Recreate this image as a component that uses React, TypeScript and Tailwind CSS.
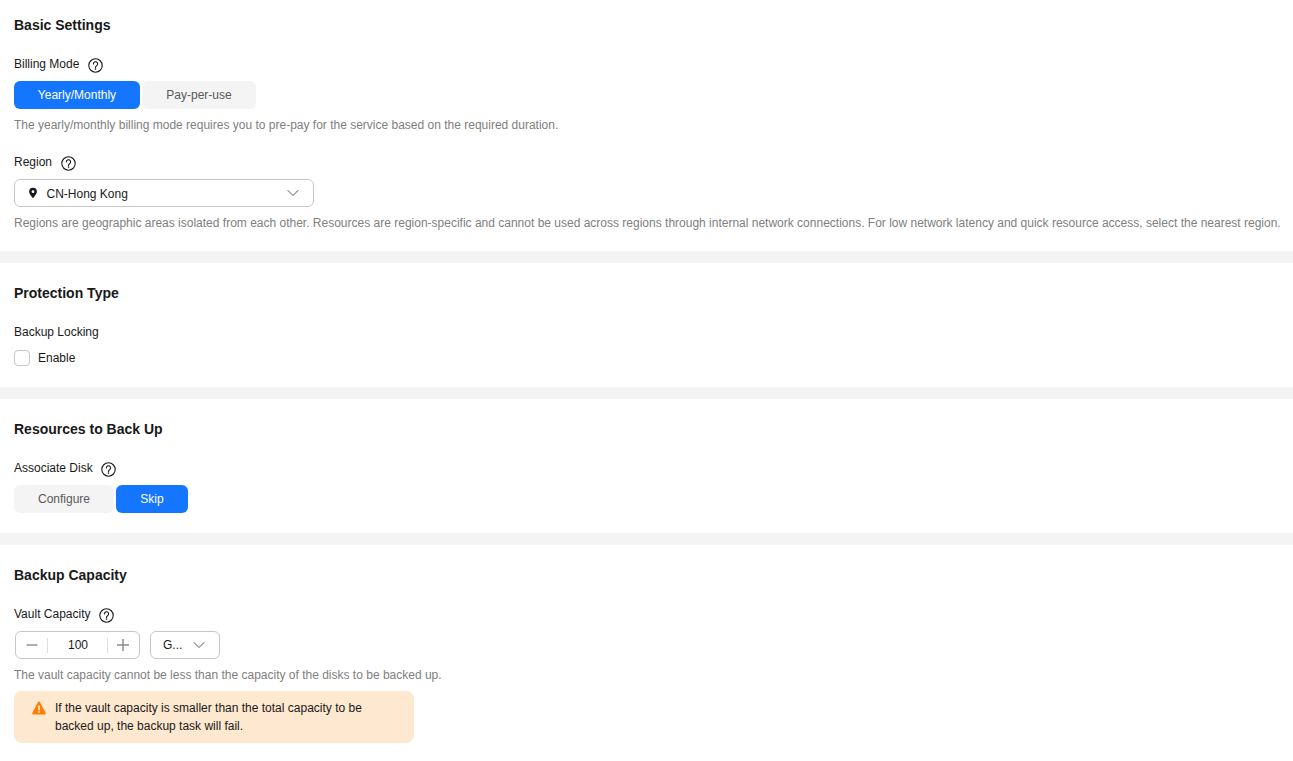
import React from "react";
import { ChevronDown } from "lucide-react";

function HelpIcon() {
  return (
    <svg width="15" height="15" viewBox="0 0 15 15" fill="none" className="ml-[8.5px] mt-[2px]">
      <circle cx="7.500" cy="7.500" r="6.700" stroke="#191919" strokeWidth="1.100" />
      <path d="M5.400 5.900a2.100 2.100 0 1 1 3.200 1.800c-.8.500-1.100.9-1.100 1.700" stroke="#191919" strokeWidth="1.100" strokeLinecap="round" />
      <circle cx="7.500" cy="11.100" r="0.800" fill="#191919" />
    </svg>
  );
}

function Label({ text, help }: { text: string; help?: boolean }) {
  return (
    <div className="flex items-center h-4 text-[#191919]">
      <span>{text}</span>
      {help && <HelpIcon />}
    </div>
  );
}

function Hint({ children }: { children: React.ReactNode }) {
  return <p className="text-[#808080] h-4 leading-4 whitespace-nowrap">{children}</p>;
}

function Segment({ text, active, width }: { text: string; active?: boolean; width: string }) {
  return (
    <div
      className={`${width} h-7 rounded-md flex items-center justify-center ${
        active ? "bg-[#1476ff] text-white font-medium" : "bg-[#f4f4f4] text-[#595959]"
      }`}
    >
      {text}
    </div>
  );
}

function Section({ title, className, children }: { title: string; className: string; children: React.ReactNode }) {
  return (
    <section className={`bg-white px-[14px] ${className}`}>
      <h2 className="text-sm leading-5 font-bold text-[#191919]">{title}</h2>
      {children}
    </section>
  );
}

export default function App() {
  return (
    <div
      className="w-[1293px] h-[761px] overflow-hidden bg-white text-xs leading-4 flex flex-col"
      style={{ fontFamily: '"Liberation Sans", Arial, sans-serif' }}
    >
      <Section title="Basic Settings" className="h-[251px] pt-[15px]">
        <div className="mt-[21px]">
          <Label text="Billing Mode" help />
        </div>
        <div className="flex gap-[2px] mt-[9px]">
          <Segment text="Yearly/Monthly" active width="w-[126px]" />
          <Segment text="Pay-per-use" width="w-[114px]" />
        </div>
        <div className="mt-2">
          <Hint>The yearly/monthly billing mode requires you to pre-pay for the service based on the required duration.</Hint>
        </div>
        <div className="mt-[21px]">
          <Label text="Region" help />
        </div>
        <div className="mt-[9px] w-[300px] h-7 rounded-md border border-[#c7c7c7] flex items-center pl-[13px] pr-[10px] text-[#191919]">
          <svg width="10" height="12" viewBox="0 0 10 12" className="mr-[8.500px]">
            <path
              fillRule="evenodd"
              d="M5 .8a3.900 3.900 0 0 1 3.900 3.900C8.900 7.200 5 11 5 11S1.100 7.200 1.100 4.700A3.900 3.900 0 0 1 5 .8Zm0 2.500a1.400 1.400 0 1 0 0 2.800 1.400 1.400 0 0 0 0-2.800Z"
              fill="#191919"
            />
          </svg>
          <span className="pt-px">CN-Hong Kong</span>
          <ChevronDown size={20} strokeWidth={1.2} className="ml-auto text-[#595959]" />
        </div>
        <div className="mt-2">
          <Hint>
            Regions are geographic areas isolated from each other. Resources are region-specific and cannot be used across
            regions through internal network connections. For low network latency and quick resource access, select the nearest
            region.
          </Hint>
        </div>
      </Section>

      <div className="h-3 bg-[#f4f4f4] shrink-0" />

      <Section title="Protection Type" className="h-[124px] pt-5">
        <div className="mt-[21px]">
          <Label text="Backup Locking" />
        </div>
        <div className="flex items-center mt-[10px] h-4 text-[#191919]">
          <span className="w-4 h-4 rounded-[4px] border border-[#c7c7c7] mr-2" />
          <span>Enable</span>
        </div>
      </Section>

      <div className="h-3 bg-[#f4f4f4] shrink-0" />

      <Section title="Resources to Back Up" className="h-[134px] pt-5">
        <div className="mt-[21px]">
          <Label text="Associate Disk" help />
        </div>
        <div className="flex gap-[2px] mt-[9px]">
          <Segment text="Configure" width="w-[100px]" />
          <Segment text="Skip" active width="w-[72px]" />
        </div>
      </Section>

      <div className="h-3 bg-[#f4f4f4] shrink-0" />

      <Section title="Backup Capacity" className="flex-1 pt-5">
        <div className="mt-[21px]">
          <Label text="Vault Capacity" help />
        </div>
        <div className="flex mt-[9px] pl-px gap-[10px]">
          <div className="w-[125px] h-7 rounded-md border border-[#c7c7c7] flex items-center text-[#191919]">
            <div className="w-[32px] h-[15px] border-r border-[#dfdfdf] flex items-center justify-center">
              <svg width="12" height="12" viewBox="0 0 12 12">
                <rect x="0.500" y="5.300" width="11" height="1.400" fill="#8a8a8a" />
              </svg>
            </div>
            <div className="w-[59px] pl-px text-center">100</div>
            <div className="flex-1 h-[15px] pr-px border-l border-[#dfdfdf] flex items-center justify-center">
              <svg width="12" height="12" viewBox="0 0 12 12">
                <path d="M5.300 0h1.400v5.300H12v1.400H6.700V12H5.300V6.700H0V5.300h5.300Z" fill="#8a8a8a" />
              </svg>
            </div>
          </div>
          <div className="w-[70px] h-7 rounded-md border border-[#c7c7c7] flex items-center pl-3 pr-[10px] text-[#191919]">
            <span>G...</span>
            <ChevronDown size={20} strokeWidth={1.2} className="ml-auto text-[#595959]" />
          </div>
        </div>
        <div className="mt-2">
          <Hint>The vault capacity cannot be less than the capacity of the disks to be backed up.</Hint>
        </div>
        <div className="mt-[8px] w-[400px] h-[52px] rounded-lg bg-[#ffe8d0] flex pl-[18px] pt-2 text-[#191919]">
          <svg width="14" height="14" viewBox="0 0 14 14" className="mt-[2px] mr-[9px] shrink-0">
            <path d="M7 .6c.4 0 .7.2.9.5l5.800 11c.3.6-.1 1.300-.8 1.300H1.100c-.7 0-1.100-.7-.8-1.300l5.800-11c.2-.3.500-.5.900-.5Z" fill="#ff7d00" />
            <rect x="6.300" y="4.500" width="1.400" height="4.800" fill="#fff" />
            <rect x="6.300" y="10.300" width="1.400" height="1.400" fill="#fff" />
          </svg>
          <span className="w-[320px] leading-[18px] block">
            If the vault capacity is smaller than the total capacity to be backed up, the backup task will fail.
          </span>
        </div>
      </Section>
    </div>
  );
}
